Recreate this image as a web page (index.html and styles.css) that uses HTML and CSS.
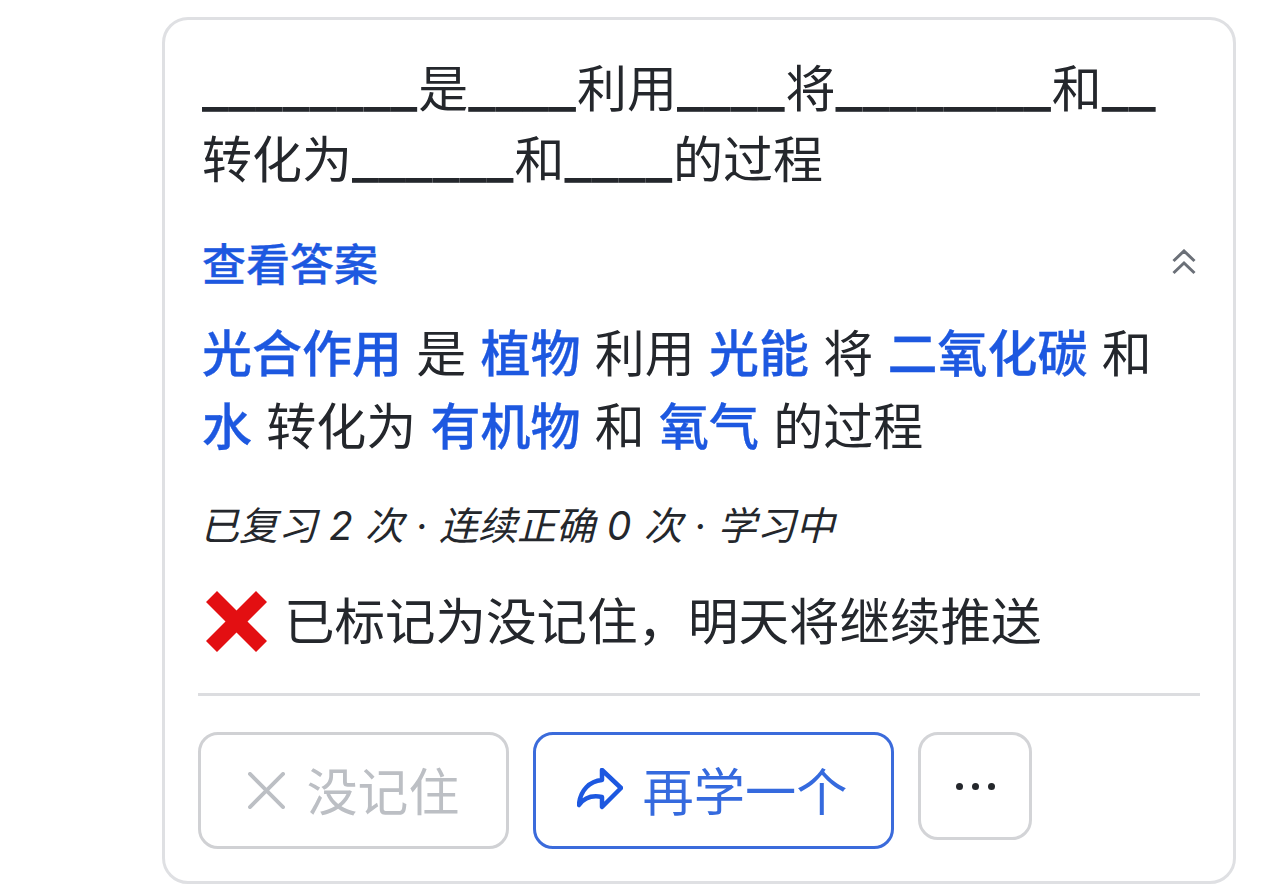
FILE: index.html
```html
<!DOCTYPE html>
<html lang="zh-CN">
<head>
<meta charset="utf-8">
<title>闪卡</title>
<link rel="stylesheet" href="styles.css">
</head>
<body>
<main class="card">
  <div class="content">
    <p class="question"><span class="blank">________</span>是<span class="blank">____</span>利用<span class="blank">____</span>将<span class="blank">________</span>和<span class="blank">__</span>转化为<span class="blank">______</span>和<span class="blank">____</span>的过程</p>
    <div class="toggle">
      <span class="toggle-label">查看答案</span>
      <svg class="chevrons" viewBox="0 0 24 26" aria-hidden="true"><path d="M1.500 12 12 2 22.500 12M1.500 24 12 14 22.500 24"/></svg>
    </div>
    <p class="answer"><b>光合作用</b> 是 <b>植物</b> 利用 <b>光能</b> 将 <b>二氧化碳</b> 和 <b>水</b> 转化为 <b>有机物</b> 和 <b>氧气</b> 的过程</p>
    <p class="meta">已复习 2 次 · 连续正确 0 次 · 学习中</p>
    <p class="status"><svg class="cross" viewBox="0 0 61 61" aria-hidden="true"><path d="M11 0 30.500 19.500 50 0 61 11 41.500 30.500 61 50 50 61 30.500 41.500 11 61 0 50 19.500 30.500 0 11Z"/></svg>已标记为没记住，明天将继续推送</p>
  </div>
  <div class="actions">
    <button class="btn btn-muted"><svg class="icon-x" viewBox="0 0 38 38" aria-hidden="true"><path d="M2 2 36 36M36 2 2 36"/></svg>没记住</button>
    <button class="btn btn-primary"><svg class="icon-share" viewBox="0 0 46 42" aria-hidden="true"><path d="M25 2 44 20 25 39V29C15 27 7 30 2 37 3 22 13 13 25 12Z"/></svg>再学一个</button>
    <button class="btn-more" aria-label="更多"><span class="dot"></span><span class="dot"></span><span class="dot"></span></button>
  </div>
</main>
</body>
</html>
```

FILE: styles.css
```css
* { box-sizing: border-box; }
html, body { margin: 0; padding: 0; background: #fff; }
body {
  width: 1284px;
  height: 895px;
  overflow: hidden;
  padding: 17px 48px 0 162px;
  font-family: Inter, "Noto Sans CJK SC", sans-serif;
  color: #24272c;
}
.card {
  width: 1074px;
  height: 867px;
  border: 3px solid #dfe0e3;
  border-radius: 26px;
  padding: 0 33px;
}
.content { padding: 0 0 0 4px; }
p { margin: 0; }
.question {
  margin-top: 34px;
  font-size: 50px;
  line-height: 71px;
  width: 990px;
}
.blank { display: inline-block; margin-right: 1px; font-size: 59px; line-height: 50px; }
.toggle {
  display: flex;
  align-items: center;
  justify-content: space-between;
  margin-top: 35px;
  height: 62px;
  padding-right: 4px;
}
.toggle-label { color: #1d58e0; font-size: 44px; font-weight: 500; -webkit-text-stroke: 0.3px #1d58e0; }
.chevrons { width: 24px; height: 26px; fill: none; stroke: #6b7078; stroke-width: 3; }
.answer {
  margin-top: 25px;
  font-size: 50px;
  line-height: 73px;
  width: 998px;
  word-spacing: 0.200px;
}
.answer b { color: #1d58e0; font-weight: 500; -webkit-text-stroke: 0.3px #1d58e0; }
.meta {
  margin: 32px 0 0 -2px;
  font-size: 39px;
  line-height: 60px;
  font-style: italic;
  word-spacing: 1px;
}
.status {
  display: flex;
  align-items: center;
  gap: 17px;
  margin-top: 31px;
  padding-left: 4px;
  font-size: 50.500px;
  line-height: 70px;
}
.cross { width: 61px; height: 61px; margin-top: -2px; fill: #e30f12; flex: none; }
.actions {
  display: flex;
  align-items: flex-start;
  gap: 24px;
  margin-top: 36px;
  padding-top: 36px;
  border-top: 3px solid #dcdde0;
}
.btn {
  display: flex;
  align-items: center;
  justify-content: center;
  height: 117px;
  border-radius: 20px;
  background: #fff;
  font-family: inherit;
  padding: 0 0 3px;
}
.btn-muted { width: 311px; border: 3px solid #d0d1d4; color: #bcbfc4; gap: 22px; font-size: 50.800px; }
.btn-primary { width: 361px; border: 3px solid #3b6bdb; color: #356ade; gap: 20px; font-size: 51.200px; padding-right: 3px; }
.icon-x { width: 37px; height: 37px; margin-top: 3px; fill: none; stroke: #bcbfc4; stroke-width: 4; stroke-linecap: round; }
.icon-share { width: 46px; height: 42px; fill: none; stroke: #1d58e0; stroke-width: 4.500; stroke-linejoin: round; }
.btn-more {
  display: flex;
  align-items: center;
  justify-content: center;
  gap: 9px;
  width: 114px;
  height: 108px;
  border: 3px solid #d3d4d7;
  border-radius: 20px;
  background: #fff;
  padding: 0;
}
.dot { width: 7px; height: 7px; border-radius: 50%; background: #24272c; }
```
